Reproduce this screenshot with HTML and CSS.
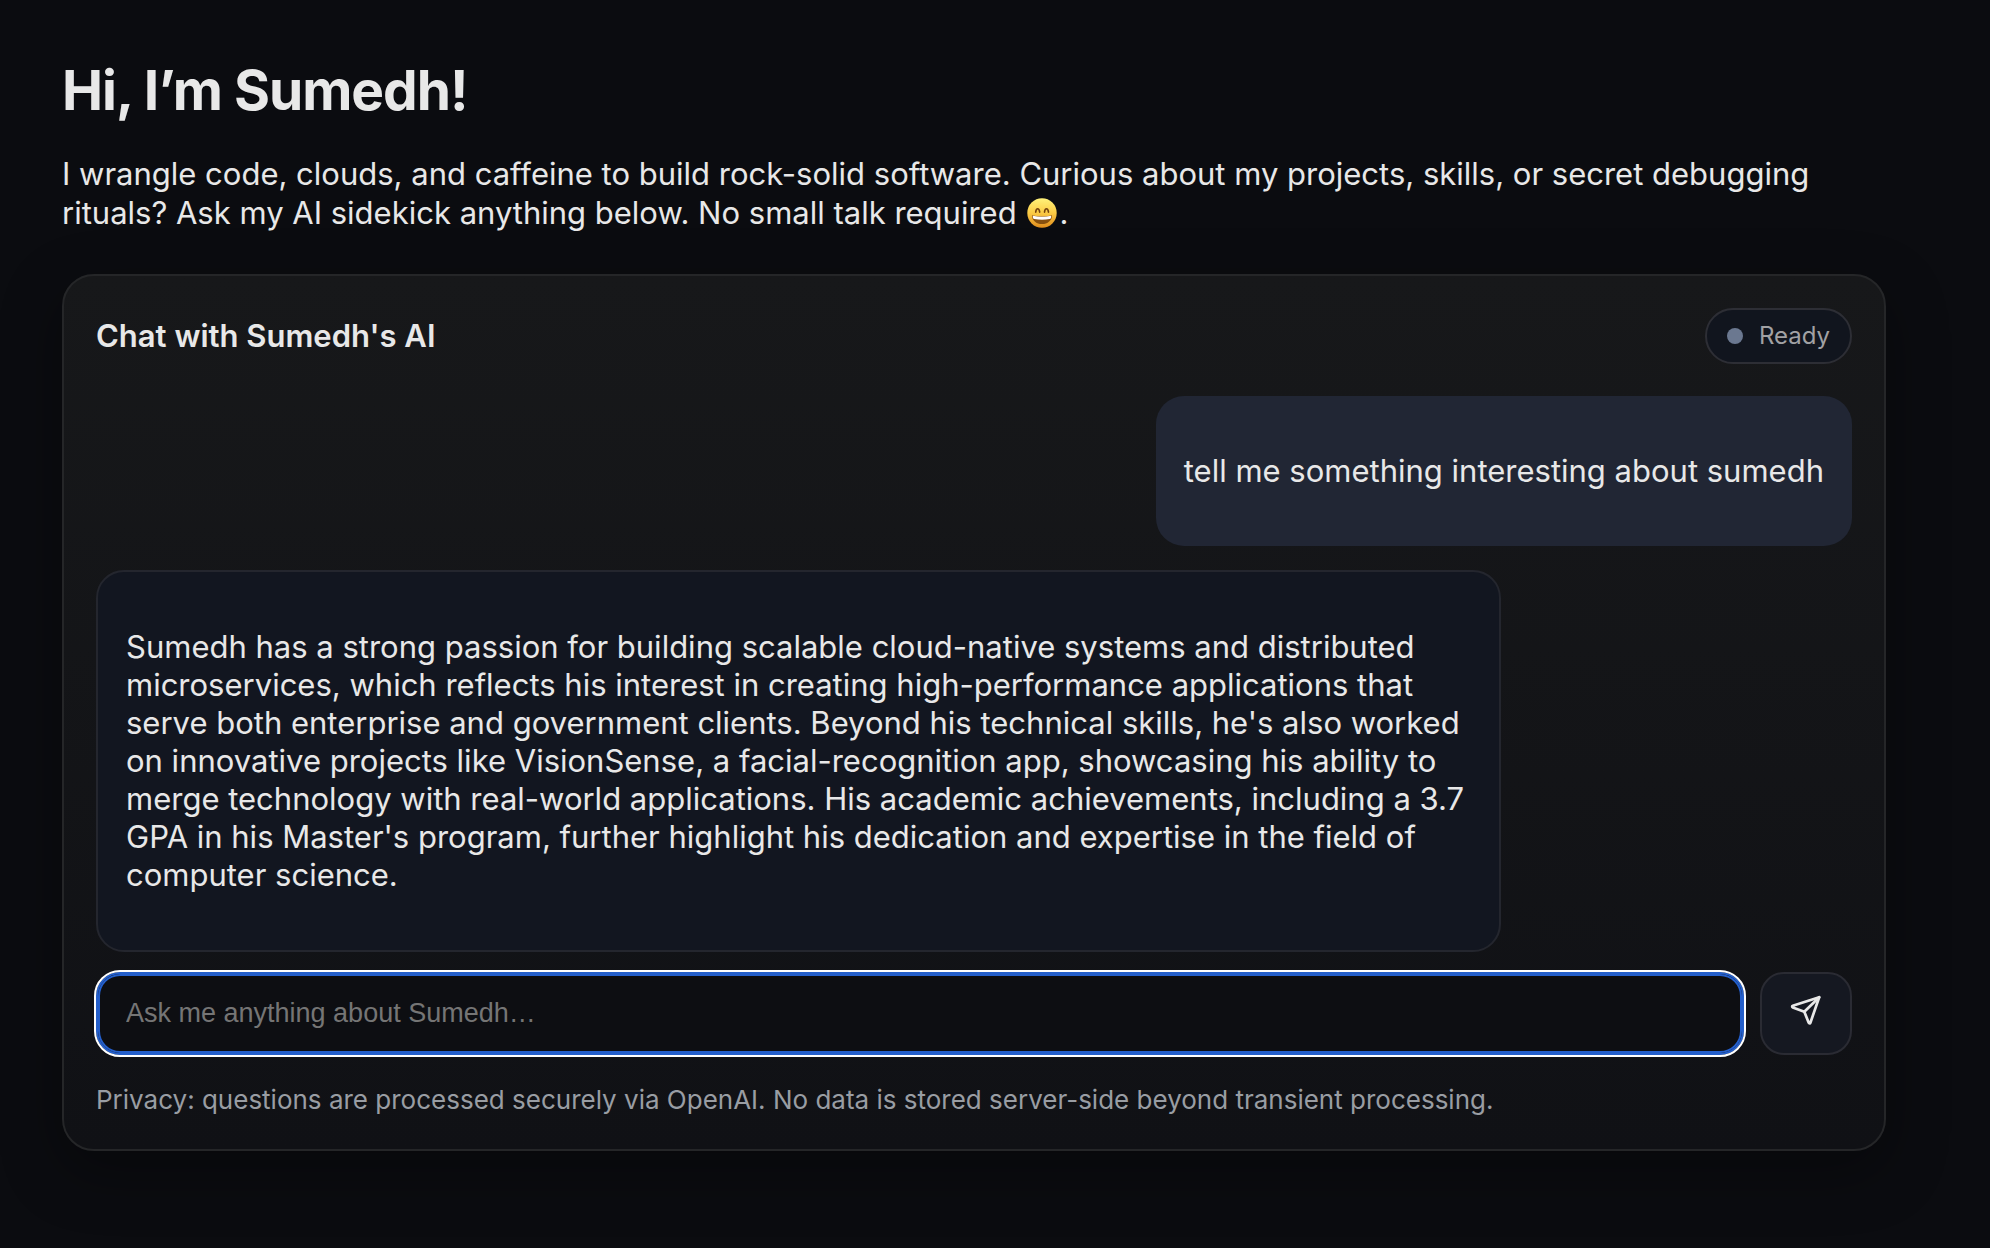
FILE: index.html
```html
<!DOCTYPE html>
<html lang="en">
<head>
  <meta charset="utf-8">
  <meta name="viewport" content="width=device-width, initial-scale=1">
  <title>Sumedh</title>
  <link rel="stylesheet" href="styles.css">
</head>
<body>
  <main class="page">
    <h1 class="title">Hi, I’m Sumedh!</h1>
    <p class="intro">I wrangle code, clouds, and caffeine to build rock-solid software. Curious about my projects, skills, or secret debugging rituals? Ask my AI sidekick anything below. No small talk required <svg class="emoji" viewBox="0 0 30 30" role="img" aria-label="grinning face"><defs><linearGradient id="face" x1="0" y1="0" x2="0" y2="1"><stop offset="0" stop-color="#fff27a"/><stop offset=".5" stop-color="#fbcb45"/><stop offset="1" stop-color="#e08c1c"/></linearGradient></defs><circle cx="15" cy="15" r="14.7" fill="url(#face)"/><path d="M8.700 14.200c.5-4.600 3.400-4.600 4 0M17.500 14.200c.5-4.600 3.400-4.600 4 0" fill="none" stroke="#75430d" stroke-width="1.600" stroke-linecap="round"/><path d="M5 17.200c6 1.600 14 1.600 20 0 .3 5.200-4.500 8.800-10 8.800s-10.300-3.600-10-8.800z" fill="#87500f"/><path d="M5.800 17.700c6 1.400 12.400 1.400 18.400 0 .2 1.800-.4 3-1.400 3.300-4.800 1.100-10.800 1.100-15.600 0-1-.3-1.600-1.500-1.400-3.300z" fill="#fff"/></svg>.</p>

    <section class="card" aria-labelledby="chat-title">
      <header class="card-header">
        <h2 class="card-title" id="chat-title">Chat with Sumedh's AI</h2>
        <span class="status" role="status"><span class="status-dot"></span>Ready</span>
      </header>

      <div class="messages">
        <div class="message message-user"><p>tell me something interesting about sumedh</p></div>
        <div class="message message-bot"><p>Sumedh has a strong passion for building scalable cloud-native systems and distributed microservices, which reflects his interest in creating high-performance applications that serve both enterprise and government clients. Beyond his technical skills, he's also worked on innovative projects like VisionSense, a facial-recognition app, showcasing his ability to merge technology with real-world applications. His academic achievements, including a 3.7 GPA in his Master's program, further highlight his dedication and expertise in the field of computer science.</p></div>
      </div>

      <form class="composer">
        <input class="composer-input" type="text" placeholder="Ask me anything about Sumedh…" aria-label="Ask a question">
        <button class="composer-send" type="button" aria-label="Send">
          <svg class="send-icon" viewBox="0 0 32 32" fill="none" stroke="currentColor" stroke-width="2.700" stroke-linejoin="round" stroke-linecap="round" aria-hidden="true"><path d="M29.200 3.200 2.800 11.800c-.9.300-.9 1.300 0 1.700L14.300 17.700l4.400 11c.4.900 1.400.9 1.700 0z"/><path d="M14.300 17.700 29.200 3.200"/></svg>
        </button>
      </form>

      <p class="privacy">Privacy: questions are processed securely via OpenAI. No data is stored server-side beyond transient processing.</p>
    </section>
  </main>
</body>
</html>
```

FILE: styles.css
```css
* {
  box-sizing: border-box;
}

body {
  margin: 0;
  min-height: 100vh;
  background: #0b0c10;
  color: #e8e8e8;
  font-family: Inter, "Liberation Sans", sans-serif;
  font-size: 31px;
  line-height: 38px;
}

.page {
  padding: 56px 104px 96px 62px;
}

.title {
  margin: 0;
  font-size: 55px;
  line-height: 68px;
  font-weight: 700;
  letter-spacing: -1px;
}

.intro {
  margin: 30px 0 42px;
  line-height: 39px;
}

.emoji {
  width: 30px;
  height: 30px;
  margin: 0 2px;
  vertical-align: -4px;
}

.card {
  padding: 32px;
  border: 2px solid #252628;
  border-radius: 32px;
  background: linear-gradient(#17181a, #101115);
  box-shadow: 0 20px 60px rgba(0, 0, 0, 0.35);
}

.card-header {
  display: flex;
  align-items: center;
  justify-content: space-between;
  margin-bottom: 32px;
}

.card-title {
  margin: 0;
  font-size: 31px;
  font-weight: 600;
}

.status {
  display: flex;
  align-items: center;
  gap: 16px;
  height: 56px;
  padding: 0 20px;
  border: 2px solid #2d2e35;
  border-radius: 28px;
  background: #11151e;
  color: #a1a1a4;
  font-size: 24px;
}

.status-dot {
  width: 16px;
  height: 16px;
  border-radius: 50%;
  background: #6b7890;
}

.messages {
  display: flex;
  flex-direction: column;
  gap: 24px;
}

.message {
  max-width: 80%;
  padding: 24px 28px;
  border-radius: 28px;
}

.message p {
  margin: 32px 0;
}

.message-user {
  align-self: flex-end;
  background: #212634;
}

.message-bot {
  align-self: flex-start;
  border: 2px solid #24262e;
  background: #121620;
}

.composer {
  display: flex;
  gap: 16px;
  margin-top: 20px;
}

.composer-input {
  flex: 1;
  min-width: 0;
  height: 83px;
  padding: 0 28px;
  border: 2px solid #245fcb;
  border-radius: 24px;
  outline: 2px solid #fff;
  box-shadow: inset 0 0 0 2px #245fcb;
  background: #0d0e12;
  color: #e8e8e8;
  font-family: "Liberation Sans", Arial, sans-serif;
  font-size: 27px;
}

.composer-input::placeholder {
  color: #757575;
  opacity: 1;
}

.composer-send {
  display: flex;
  align-items: center;
  justify-content: center;
  width: 92px;
  height: 83px;
  padding: 0 0 8px;
  border: 2px solid #2a2b33;
  border-radius: 24px;
  background: #151821;
  color: #e8e8e8;
}

.send-icon {
  width: 32px;
  height: 32px;
}

.privacy {
  margin: 28px 0 0;
  color: #999da3;
  font-size: 26px;
  line-height: 34px;
}
```
